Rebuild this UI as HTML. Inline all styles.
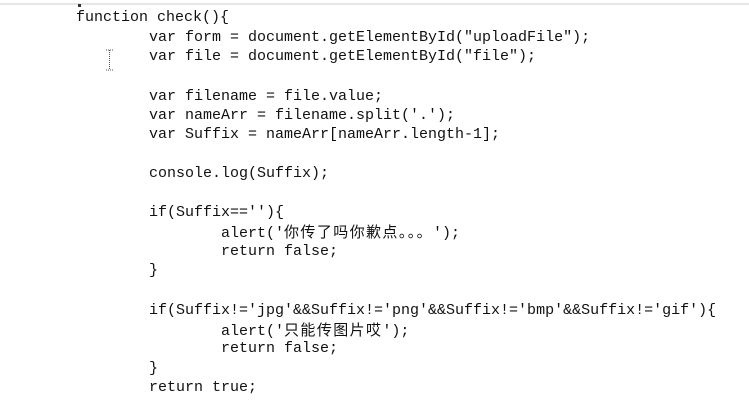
<!DOCTYPE html>
<html><head><meta charset="utf-8"><style>
html,body{margin:0;padding:0;background:#fff;width:749px;height:413px;overflow:hidden;position:relative}
.l{position:absolute;white-space:pre;font-family:"Liberation Mono","Noto Sans CJK SC",monospace;font-size:15px;line-height:20px;color:#111}
.c{font-family:"Noto Sans CJK SC",sans-serif;letter-spacing:1.4px;font-size:15px}
.top{position:absolute;left:0;top:3px;width:749px;height:2px;background:#e6e6e6}
</style></head><body>
<div class="top"></div>
<div style="position:absolute;left:78px;top:4px;width:3px;height:3px;background:#333"></div>
<svg style="position:absolute;left:104px;top:48px" width="12" height="28"><path d="M2 2h7M5.5 2v20M2 22h7" stroke="#555" stroke-width="1" stroke-dasharray="1 1" fill="none"/></svg>
<div class="l" style="left:76px;top:8px">function check(){</div>
<div class="l" style="left:149px;top:28px">var form = document.getElementById("uploadFile");</div>
<div class="l" style="left:149px;top:47px">var file = document.getElementById("file");</div>
<div class="l" style="left:149px;top:87px">var filename = file.value;</div>
<div class="l" style="left:149px;top:106px">var nameArr = filename.split('.');</div>
<div class="l" style="left:149px;top:125px">var Suffix = nameArr[nameArr.length-1];</div>
<div class="l" style="left:149px;top:164px">console.log(Suffix);</div>
<div class="l" style="left:149px;top:203px">if(Suffix==''){</div>
<div class="l" style="left:221px;top:222px">alert('<span class="c">你传了吗你歉点。。。</span>');</div>
<div class="l" style="left:221px;top:242px">return false;</div>
<div class="l" style="left:149px;top:261px">}</div>
<div class="l" style="left:149px;top:301px">if(Suffix!='jpg'&amp;&amp;Suffix!='png'&amp;&amp;Suffix!='bmp'&amp;&amp;Suffix!='gif'){</div>
<div class="l" style="left:221px;top:320px">alert('<span class="c">只能传图片哎</span>');</div>
<div class="l" style="left:221px;top:339px">return false;</div>
<div class="l" style="left:149px;top:359px">}</div>
<div class="l" style="left:149px;top:378px">return true;</div>
</body></html>
